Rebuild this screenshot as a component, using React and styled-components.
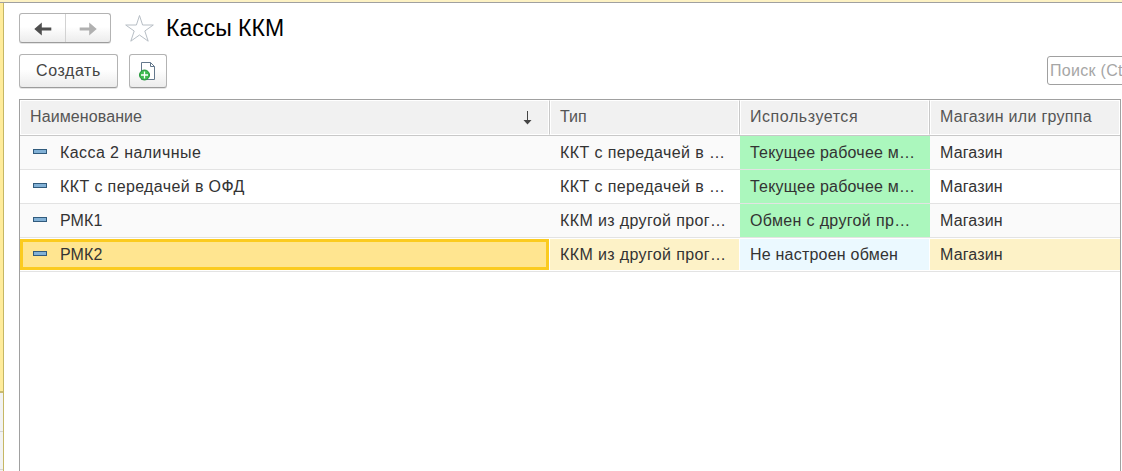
import React, { Fragment } from 'react';
import styled, { createGlobalStyle, css } from 'styled-components';

const GlobalStyle = createGlobalStyle`
  * {
    box-sizing: border-box;
  }

  body {
    margin: 0;
    overflow: hidden;
    background: #fff;
    font-family: 'Liberation Sans', Arial, sans-serif;
    font-size: 16px;
    color: #333;
  }
`;

const Window = styled.div`
  display: flex;
  flex-direction: column;
  width: 1122px;
  height: 471px;
  overflow: hidden;
`;

const TopStrip = styled.div`
  flex: none;
  height: 3px;
  background: #fdf2c4;
  border-bottom: 1px solid #a0a0a0;
`;

const Body = styled.div`
  display: flex;
  flex: 1;
  min-height: 0;
`;

const Sidebar = styled.div`
  display: flex;
  flex-direction: column;
  flex: none;
  width: 4px;
  background: #f2f2f2;
  border-right: 1px solid #c6b764;
`;

const ActiveSection = styled.div`
  height: 390px;
  background: #ffec9c;
  border-bottom: 2px solid #c9bb72;
`;

const Section = styled.div`
  height: ${props => props.height}px;
  border-bottom: 1px solid #d4d4d4;
`;

const Page = styled.div`
  display: flex;
  flex-direction: column;
  flex: 1;
  min-width: 0;
  padding: 10px 0 0 15px;
`;

const TitleBar = styled.div`
  display: flex;
  align-items: center;
  height: 30px;
`;

const raised = css`
  border: 1px solid #b3b3b3;
  border-bottom-color: #9c9c9c;
  border-radius: 3px;
  background: linear-gradient(#fff 45%, #ececec);
  box-shadow: 0 1px 0 #e4e4e4;
`;

const NavGroup = styled.div`
  ${raised}
  display: flex;
  width: 92px;
  height: 30px;
`;

const NavButton = styled.button`
  display: flex;
  align-items: center;
  justify-content: center;
  width: 45px;
  padding: 1px 0 0;
  border: 0;
  background: none;

  & + & {
    border-left: 1px solid #d2d2d2;
  }
`;

const Star = styled.svg`
  flex: none;
  margin-left: 13px;
`;

const Title = styled.h1`
  margin: 0 0 0 11px;
  font-size: 23px;
  font-weight: normal;
  line-height: 30px;
  color: #000;
  white-space: nowrap;
`;

const Toolbar = styled.div`
  display: flex;
  height: 34px;
  margin-top: 11px;
`;

const Button = styled.button`
  ${raised}
  display: flex;
  align-items: center;
  justify-content: center;
  width: ${props => props.width}px;
  height: 34px;
  margin-right: 11px;
  padding: 0;
  font: inherit;
  letter-spacing: 0.6px;
  color: #444;
`;

const Search = styled.div`
  flex: none;
  width: 220px;
  height: 29px;
  margin: 2px -145px 0 auto;
  padding-left: 2px;
  border: 1px solid #a0a0a0;
  border-radius: 3px;
  line-height: 27px;
  letter-spacing: 0.3px;
  color: #a6a6a6;
  white-space: nowrap;
`;

const Table = styled.div`
  flex: 1;
  width: 1102px;
  margin-top: 11px;
  border: 1px solid #a0a0a0;
  border-bottom: 0;
`;

const Row = styled.div`
  display: grid;
  grid-template-columns: 530px 190px 190px 190px;
  height: 34px;
  background: ${props => (props.$odd ? '#fafafa' : '#fff')};
  border-bottom: 1px solid #e3e3e3;
  ${props => props.$selected && css`
    padding: 1px 0;
    background: #fff;
  `}
`;

const HeaderRow = styled(Row)`
  height: 36px;
  background: #f1f1f1;
  border-bottom-color: #c8c8c8;
`;

const HeaderCell = styled.div`
  display: flex;
  justify-content: space-between;
  padding: 0 17px 0 9px;
  border: 1px solid #fff;
  line-height: 32px;
  letter-spacing: ${props => props.$tracking || 0}px;
  color: #555;
  white-space: nowrap;
  ${props => !props.$last && css`
    border-right-color: #c8c8c8;
    box-shadow: inset -1px 0 #fff;
  `}
`;

const SortArrow = styled.svg`
  margin-top: 10px;
`;

const Cell = styled.div`
  padding-left: 10px;
  line-height: 33px;
  letter-spacing: ${props => props.$tracking || 0}px;
  white-space: nowrap;
  background: ${props => props.$color || 'transparent'};
  ${props => props.$selected && css`
    margin-right: ${props.$last ? 0 : 1}px;
    background: ${props.$color || '#fdf2c7'};
    line-height: 31px;
  `}
`;

const NameCell = styled.div`
  display: flex;
  align-items: center;
  padding-left: 13px;
  line-height: 33px;
  letter-spacing: ${props => props.$tracking}px;
  ${props => props.$selected && css`
    margin-right: 1px;
    padding-left: 10px;
    border: 3px solid #fbcb20;
    background: #ffe590;
    line-height: 25px;
  `}
`;

const ItemMark = styled.span`
  width: 14px;
  height: 5px;
  margin: 0 13px 2px 0;
  border: 1px solid #315b7d;
  background: #82b1d6;
`;

const GREEN = '#abf7bd';
const BLUE = '#ebf9ff';

// second value of every pair is the letter spacing
const registers = [
  { name: ['Касса 2 наличные', 0.42], type: ['ККТ с передачей в …', 0.4], used: ['Текущее рабочее м…', 0.22], color: GREEN },
  { name: ['ККТ с передачей в ОФД', 0.38], type: ['ККТ с передачей в …', 0.4], used: ['Текущее рабочее м…', 0.22], color: GREEN },
  { name: ['РМК1', 0.1], type: ['ККМ из другой прог…', 0.37], used: ['Обмен с другой пр…', 0.35], color: GREEN },
  { name: ['РМК2', 0.1], type: ['ККМ из другой прог…', 0.37], used: ['Не настроен обмен', 0.22], color: BLUE },
];

const Arrow = ({ color, flip }) => (
  <svg width="18" height="14" viewBox="0 0 18 14">
    <path
      d="M0.3 7 L7.8 0.6 V5.4 H17.3 V8.6 H7.8 V13.4 Z"
      fill={color}
      transform={flip ? 'translate(18 0) scale(-1 1)' : undefined}
    />
  </svg>
);

const NewDocument = () => (
  <svg width="18" height="20" viewBox="0 0 18 20">
    <path d="M2.5 1.5 H11.5 L15.5 5.5 V18.5 H2.5 Z" fill="#fff" stroke="#64788c" />
    <path d="M11.5 1.5 V5.5 H15.5" fill="none" stroke="#64788c" />
    <circle cx="5.5" cy="14" r="5" fill="#3fbb50" stroke="#23943a" />
    <path d="M5.5 10.5 V17.5 M2 14 H9" stroke="#fff" strokeWidth="1.3" />
  </svg>
);

const App = () => (
  <Fragment>
    <GlobalStyle />
    <Window>
      <TopStrip />
      <Body>
        <Sidebar>
          <ActiveSection />
          <Section height={39} />
          <Section height={38} />
        </Sidebar>
        <Page>
          <TitleBar>
            <NavGroup>
              <NavButton><Arrow color="#4f4f4f" /></NavButton>
              <NavButton><Arrow color="#b0b0b0" flip /></NavButton>
            </NavGroup>
            <Star width="31" height="30" viewBox="0 0 31 30">
              <path
                d="M15.5 2.5 L18.6 12 H29.3 L20.8 18 L24.2 28.2 L15.5 22 L6.8 28.2 L10.2 18 L1.7 12 H12.4 Z"
                fill="#fff"
                stroke="#b7bec5"
              />
            </Star>
            <Title>Кассы ККМ</Title>
          </TitleBar>
          <Toolbar>
            <Button width={99}>Создать</Button>
            <Button width={38}><NewDocument /></Button>
            <Search>Поиск (Ct</Search>
          </Toolbar>
          <Table>
            <HeaderRow>
              <HeaderCell $tracking={0.1}>
                Наименование
                <SortArrow width="9" height="14" viewBox="0 0 9 14">
                  <path d="M4.5 0 V11" stroke="#444" />
                  <path d="M0.5 9 H8.5 L4.5 13.5 Z" fill="#444" />
                </SortArrow>
              </HeaderCell>
              <HeaderCell>Тип</HeaderCell>
              <HeaderCell $tracking={0.55}>Используется</HeaderCell>
              <HeaderCell $tracking={0.3} $last>Магазин или группа</HeaderCell>
            </HeaderRow>
            {registers.map(({ name, type, used, color }, index) => {
              const selected = index === 3;
              return (
                <Row key={name[0]} $odd={index % 2 === 0} $selected={selected}>
                  <NameCell $selected={selected} $tracking={name[1]}>
                    <ItemMark />
                    {name[0]}
                  </NameCell>
                  <Cell $selected={selected} $tracking={type[1]}>{type[0]}</Cell>
                  <Cell $selected={selected} $tracking={used[1]} $color={color}>{used[0]}</Cell>
                  <Cell $selected={selected} $tracking={0.15} $last>Магазин</Cell>
                </Row>
              );
            })}
          </Table>
        </Page>
      </Body>
    </Window>
  </Fragment>
);

export default App;
